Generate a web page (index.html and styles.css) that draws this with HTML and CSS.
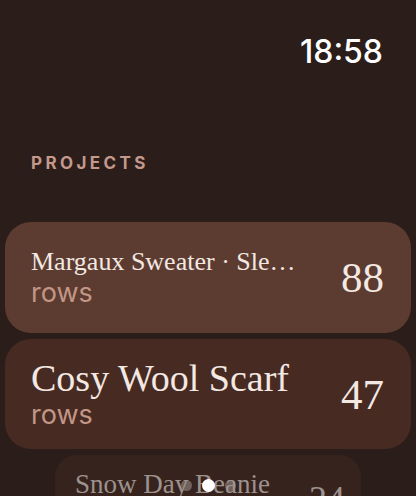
FILE: index.html
```html
<!DOCTYPE html>
<html lang="en">
<head>
    <meta charset="UTF-8">
    <meta name="viewport" content="width=device-width, initial-scale=1.0">
    <title>Row Counter</title>
    <link rel="stylesheet" href="styles.css">
</head>
<body>
    <div class="status">18:58</div>
    <h2 class="section-label">Projects</h2>

    <div class="project-list">
        <div class="card card-near">
            <div class="card-text">
                <div class="title title-small">Margaux Sweater · Sleeves</div>
                <div class="unit">rows</div>
            </div>
            <div class="count">88</div>
        </div>
        <div class="card card-focus">
            <div class="card-text">
                <div class="title title-large">Cosy Wool Scarf</div>
                <div class="unit">rows</div>
            </div>
            <div class="count">47</div>
        </div>
        <div class="card card-far">
            <div class="card-text">
                <div class="title title-far">Snow Day Beanie</div>
                <div class="unit">rows</div>
            </div>
            <div class="count count-far">24</div>
        </div>
    </div>

    <div class="page-dots">
        <span class="dot"></span>
        <span class="dot active"></span>
        <span class="dot"></span>
    </div>
</body>
</html>
```

FILE: styles.css
```css
body {
    margin: 0;
    height: 496px;
    overflow: hidden;
    background: #2a1d1a;
    font-family: Inter, "Noto Sans", sans-serif;
    color: #f2e7e1;
    position: relative;
}
.status {
    padding: 36px 33px 0 0;
    text-align: right;
    font-size: 32px;
    line-height: 32px;
    font-weight: 500;
    color: #fff;
}
.section-label {
    margin: 86px 0 0 31px;
    font-size: 17px;
    line-height: 18px;
    font-weight: 700;
    letter-spacing: 0.2em;
    text-transform: uppercase;
    color: #c4998b;
}
.project-list {
    display: flex;
    flex-direction: column;
    gap: 6px;
    margin-top: 50px;
}
.card {
    display: flex;
    align-items: center;
    gap: 20px;
    margin: 0 5px;
    height: 111px;
    padding: 0 27px 0 26px;
    border-radius: 26px;
    box-sizing: border-box;
}
.card-near {
    background: #5c3b30;
}
.card-focus {
    background: #472b23;
    height: 110px;
}
.card-far {
    background: #37231d;
    margin: 0 55px;
    padding: 0 16px 0 20px;
    align-items: flex-start;
    padding-top: 14px;
    border-radius: 22px;
}
.card-text {
    flex: 1;
    min-width: 0;
}
.title {
    font-family: "Liberation Serif", serif;
    white-space: nowrap;
    overflow: hidden;
    text-overflow: ellipsis;
    color: #f3e8e2;
}
.title-small {
    font-size: 26px;
    line-height: 30px;
    max-width: 268px;
}
.title-large {
    font-size: 38px;
    line-height: 42px;
}
.title-far {
    font-size: 27px;
    line-height: 30px;
    color: #9c928e;
}
.unit {
    font-size: 27px;
    line-height: 32px;
    color: #c39686;
}
.count {
    font-family: "Liberation Serif", serif;
    font-size: 43px;
    line-height: 1;
    color: #f3e8e2;
}
.count-far {
    font-size: 36px;
    margin-top: 12px;
    color: #9c928e;
}
.page-dots {
    position: absolute;
    left: 0;
    right: 0;
    bottom: 4px;
    display: flex;
    justify-content: center;
    align-items: center;
    gap: 10px;
}
.dot {
    width: 11px;
    height: 11px;
    border-radius: 50%;
    background: rgba(160, 150, 146, 0.55);
}
.dot.active {
    width: 13px;
    height: 13px;
    background: #fff;
}
```
